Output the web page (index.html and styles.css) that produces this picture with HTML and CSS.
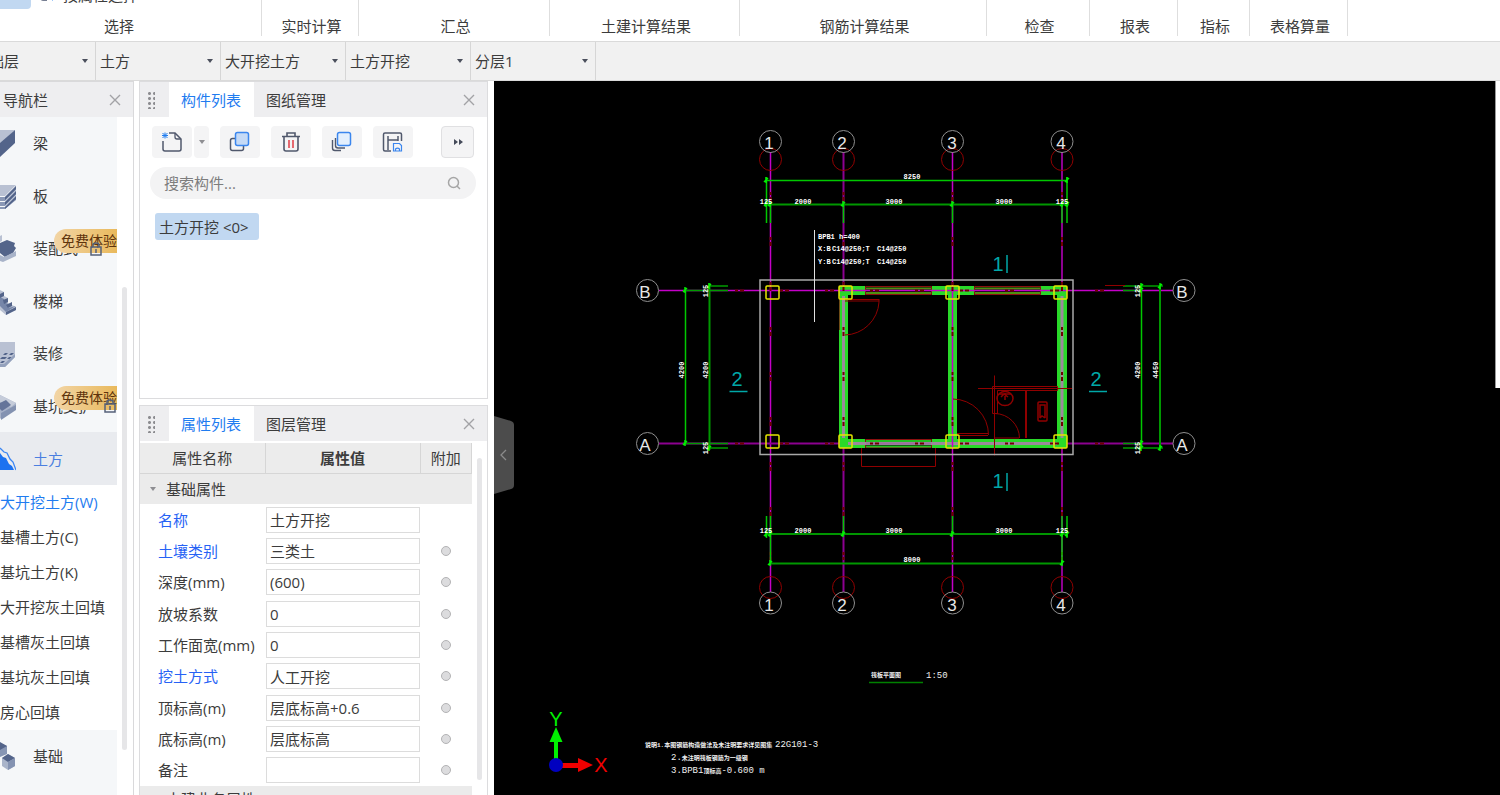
FILE: index.html
```html
<!DOCTYPE html>
<html lang="zh-CN">
<head>
<meta charset="utf-8">
<meta name="viewport" content="width=device-width, initial-scale=1">
<title>土建计量</title>
<link rel="stylesheet" href="styles.css">
</head>
<body>
<header class="ribbon">
  <section class="group g-select">
    <div class="group-tools">
      <button class="tool-active" type="button" aria-label="选择"></button>
      <button class="tool-prop" type="button">
        <svg width="20" height="16" viewBox="0 0 20 16" fill="none"><path d="M5 2H2v9q0 2 2 2h4" stroke="#4b5670" stroke-width="1.5"/><path d="M13 5l6 5-3 .5L13 14z" fill="#1f7cf0"/></svg>按属性选择
      </button>
    </div>
    <span>选择</span>
  </section>
  <section class="group g-live"><span>实时计算</span></section>
  <section class="group g-sum"><span>汇总</span></section>
  <section class="group g-civil"><span>土建计算结果</span></section>
  <section class="group g-rebar"><span>钢筋计算结果</span></section>
  <section class="group g-check"><span>检查</span></section>
  <section class="group g-report"><span>报表</span></section>
  <section class="group g-index"><span>指标</span></section>
  <section class="group g-table"><span>表格算量</span></section>
</header>

<div class="combo-bar">
  <label class="combo"><select aria-label="楼层"><option>基础层</option></select></label>
  <label class="combo"><select aria-label="构件大类"><option>土方</option></select></label>
  <label class="combo"><select aria-label="构件类型"><option>大开挖土方</option></select></label>
  <label class="combo"><select aria-label="构件"><option>土方开挖</option></select></label>
  <label class="combo"><select aria-label="分层"><option>分层1</option></select></label>
</div>

<div class="workspace">
  <aside class="nav">
    <div class="nav-head"><h2>导航栏</h2>
      <button class="close" type="button" aria-label="关闭导航栏"><svg width="12" height="12" viewBox="0 0 12 12"><path d="M1 1l10 10M11 1L1 11" stroke="#a2a2a6" stroke-width="1.4"/></svg></button>
    </div>
    <div class="nav-body">
      <nav class="nav-list">
        <a class="nav-item" href="#"><svg class="nav-icon" viewBox="0 0 16 32"><path d="M0 3h15L0 18z" fill="#b9c1d3"/><path d="M15 3v13L0 30V16z" fill="#53648a"/></svg>梁</a>
        <a class="nav-item" href="#"><svg class="nav-icon" viewBox="0 0 16 32"><path d="M0 5h16L5 16H0z" fill="#b9c1d3"/><path d="M0 17h5L16 6v4L5 21H0zM0 22h5l11-11v4L5 26H0zM0 27h5l11-11v4L5 29H0z" fill="#8a98b6"/><path d="M5 17L16 6v3L5 20zM5 22l11-11v3L5 25zM5 27l11-11v3L5 29z" fill="#53648a"/></svg>板</a>
        <a class="nav-item" href="#"><svg class="nav-icon" viewBox="0 0 16 32"><path d="M0 4l2-1v6l-2 1z" fill="#b9c1d3"/><path d="M0 11l7-3 8 3-1 3 2 2-3 5-8 4-5-4z" fill="#53648a"/><path d="M0 23l4 2 12-6v5L3 30l-3-1z" fill="#a8b3c9"/></svg>装配式
          <em class="badge">免费体验</em>
          <svg class="lock lock-a" viewBox="0 0 12 14" fill="none" stroke="#56617a" stroke-width="1.5"><path d="M3 5V3a3 2 0 016 0v2"/><path d="M1 5h10v8H1z"/><path d="M6 7v4"/></svg></a>
        <a class="nav-item" href="#"><svg class="nav-icon" viewBox="0 0 16 32"><path d="M0 5l4 2v4l4 2v5l8 4v3l-10 5-6-5z" fill="#b9c1d3"/><path d="M0 12l4 2v3l4 2v4l8-2-10 6-6-6z" fill="#7686a9"/><path d="M0 9l4-2v4l-4 2zM3 15l5-2v4l-4 2zM6 20l6-3v4l-4 2zM6 27l10-5v3L6 30z" fill="#53648a"/></svg>楼梯</a>
        <a class="nav-item" href="#"><svg class="nav-icon" viewBox="0 0 16 32"><path d="M0 5h15v15L5 30H0z" fill="#b9c1d3"/><path d="M3 18l2-2h3l-2 2zM9 18l2-2h3l-2 2zM0 22h5l2-2H2zM7 22l2-2h3l-2 2zM0 26l2-2h3l-2 2z" fill="#53648a"/><path d="M0 27h4L15 17v3L5 30H0z" fill="#94a1bc"/></svg>装修</a>
        <a class="nav-item" href="#"><svg class="nav-icon" viewBox="0 0 16 32"><path d="M0 5l16 8v5L1 29l-1-1z" fill="#a6b1c8"/><path d="M0 5l16 8-5 4-11-5z" fill="#c5ccda"/><path d="M0 13l6-3 5 5-9 6-2-2z" fill="#64749a"/><path d="M1 23l15-8v5L1 30z" fill="#8392b1"/></svg>基坑支护
          <em class="badge">免费体验</em>
          <svg class="lock lock-b" viewBox="0 0 12 14" fill="none" stroke="#56617a" stroke-width="1.5"><path d="M3 5V3a3 2 0 016 0v2"/><path d="M1 5h10v8H1z"/><path d="M6 7v4"/></svg></a>
        <a class="nav-item current" href="#"><svg class="nav-icon" viewBox="0 0 16 32"><path d="M0 10l3 4 3 1 3 6 3 2 2 4H0z" fill="#1c72f0"/><path d="M0 5l4 4 3 1 3 6 3 3 3 8" fill="none" stroke="#3c86f2" stroke-width="1.3"/></svg>土方</a>
      </nav>
      <ul class="sub-list">
        <li><a class="sub on" href="#">大开挖土方(W)</a></li>
        <li><a class="sub" href="#">基槽土方(C)</a></li>
        <li><a class="sub" href="#">基坑土方(K)</a></li>
        <li><a class="sub" href="#">大开挖灰土回填</a></li>
        <li><a class="sub" href="#">基槽灰土回填</a></li>
        <li><a class="sub" href="#">基坑灰土回填</a></li>
        <li><a class="sub" href="#">房心回填</a></li>
      </ul>
      <div class="nav-list nav-rest">
        <a class="nav-item" href="#"><svg class="nav-icon" viewBox="0 0 16 32"><path d="M0 3l7 3v8l-7 3z" fill="#8796b4"/><path d="M0 2l7 4-7 4z" fill="#53648a"/><path d="M2 18l6-4 7 4v8l-7 4-6-4z" fill="#a9b4ca"/><path d="M2 18l6-4 7 4-7 4z" fill="#53648a"/><path d="M8 22l7-4v8l-7 4z" fill="#8493b2"/></svg>基础</a>
      </div>
    </div>
    <div class="nav-thumb"></div>
  </aside>

  <div class="docks">
    <section class="dock dock-list">
      <div class="dock-head">
        <span class="grip"></span>
        <button class="tab active" type="button">构件列表</button>
        <button class="tab" type="button">图纸管理</button>
        <button class="close" type="button" aria-label="关闭"><svg width="12" height="12" viewBox="0 0 12 12"><path d="M1 1l10 10M11 1L1 11" stroke="#a2a2a6" stroke-width="1.4"/></svg></button>
      </div>
      <div class="toolbar">
        <div class="split">
          <button class="tool" type="button" aria-label="新建"><svg width="24" height="24" viewBox="0 0 24 24" fill="none"><path d="M3 11v8q0 2 2 2h14q2 0 2-2V9l-6-6H9" stroke="#50586c" stroke-width="1.5"/><path d="M15 3v4q0 2 2 2h4" stroke="#50586c" stroke-width="1.3"/><path d="M2.500 3l5 5M7.500 3l-5 5M5 2.500v6M2 5.500h6" stroke="#1f7cf0" stroke-width="1"/></svg></button>
          <button class="tool more" type="button" aria-label="新建选项"><i class="caret"></i></button>
        </div>
        <button class="tool" type="button" aria-label="复制"><svg width="24" height="24" viewBox="0 0 24 24" fill="none"><rect x="2.500" y="8.500" width="13" height="12" rx="2" stroke="#50586c" stroke-width="1.500"/><rect x="7.500" y="2.500" width="13" height="13" rx="2" fill="#c5daf6" stroke="#3b86ee" stroke-width="1.500"/></svg></button>
        <button class="tool" type="button" aria-label="删除"><svg width="24" height="24" viewBox="0 0 24 24" fill="none"><path d="M5 7v12q0 2 2 2h10q2 0 2-2V7M3 6.500h18M8 6V3h8v3" stroke="#50586c" stroke-width="1.600"/><path d="M10 10v8M14 10v8" stroke="#e34850" stroke-width="1.600"/></svg></button>
        <button class="tool" type="button" aria-label="层间复制"><svg width="24" height="24" viewBox="0 0 24 24" fill="none"><path d="M2.500 10v8q0 2.500 2.500 2.500h6M5.500 8v7.500q0 2.500 2.500 2.500h7" stroke="#50586c" stroke-width="1.400"/><rect x="7.500" y="2.500" width="13" height="13" rx="2" fill="#e3effd" stroke="#3b86ee" stroke-width="1.500"/></svg></button>
        <button class="tool" type="button" aria-label="构件存盘"><svg width="24" height="24" viewBox="0 0 24 24" fill="none"><path d="M10 21H4q-1.500 0-1.500-1.500v-15Q2.500 3 4 3h15q1.500 0 1.500 1.500V11M7 20V6M7 10h10M17 6v5" stroke="#50586c" stroke-width="1.500"/><path d="M12.500 13.500h6l2 2v5.500h-8zM14.500 21v-2q2-2 4 0v2" stroke="#3b86ee" stroke-width="1.200"/></svg></button>
        <button class="tool overflow" type="button" aria-label="更多"><svg width="12" height="8" viewBox="0 0 12 8"><path d="M2 1l4 3-4 3zM7 1l4 3-4 3z" fill="#454b5a"/></svg></button>
      </div>
      <div class="search">
        <input type="search" aria-label="搜索构件" placeholder="搜索构件...">
        <svg width="14" height="14" viewBox="0 0 14 14" fill="none" stroke="#a6a6a6" stroke-width="1.500"><circle cx="6.500" cy="6.500" r="5"/><path d="M10 10l3 3"/></svg>
      </div>
      <div class="tree"><button class="node" type="button">土方开挖 &lt;0&gt;</button></div>
    </section>

    <section class="dock dock-props">
      <div class="dock-head">
        <span class="grip"></span>
        <button class="tab active" type="button">属性列表</button>
        <button class="tab" type="button">图层管理</button>
        <button class="close" type="button" aria-label="关闭"><svg width="12" height="12" viewBox="0 0 12 12"><path d="M1 1l10 10M11 1L1 11" stroke="#a2a2a6" stroke-width="1.4"/></svg></button>
      </div>
      <div class="props-body">
        <table class="props">
          <colgroup><col class="c-name"><col class="c-value"><col class="c-extra"></colgroup>
          <thead><tr><th>属性名称</th><th class="strong">属性值</th><th>附加</th></tr></thead>
          <tbody>
            <tr class="section"><td colspan="3"><i class="caret"></i>基础属性</td></tr>
            <tr><td class="key"><label for="p1">名称</label></td><td><input class="val" id="p1" value="土方开挖"></td><td></td></tr>
            <tr><td class="key"><label for="p2">土壤类别</label></td><td><input class="val" id="p2" value="三类土"></td><td class="mid"><input class="dot" type="radio" aria-label="附加土壤类别"></td></tr>
            <tr><td><label for="p3">深度(mm)</label></td><td><input class="val" id="p3" value="(600)"></td><td class="mid"><input class="dot" type="radio" aria-label="附加深度"></td></tr>
            <tr><td><label for="p4">放坡系数</label></td><td><input class="val" id="p4" value="0"></td><td class="mid"><input class="dot" type="radio" aria-label="附加放坡系数"></td></tr>
            <tr><td><label for="p5">工作面宽(mm)</label></td><td><input class="val" id="p5" value="0"></td><td class="mid"><input class="dot" type="radio" aria-label="附加工作面宽"></td></tr>
            <tr><td class="key"><label for="p6">挖土方式</label></td><td><input class="val" id="p6" value="人工开挖"></td><td class="mid"><input class="dot" type="radio" aria-label="附加挖土方式"></td></tr>
            <tr><td><label for="p7">顶标高(m)</label></td><td><input class="val" id="p7" value="层底标高+0.6"></td><td class="mid"><input class="dot" type="radio" aria-label="附加顶标高"></td></tr>
            <tr><td><label for="p8">底标高(m)</label></td><td><input class="val" id="p8" value="层底标高"></td><td class="mid"><input class="dot" type="radio" aria-label="附加底标高"></td></tr>
            <tr><td><label for="p9">备注</label></td><td><input class="val" id="p9" value=""></td><td class="mid"><input class="dot" type="radio" aria-label="附加备注"></td></tr>
            <tr class="section"><td colspan="3"><i class="caret"></i>土建业务属性</td></tr>
          </tbody>
        </table>
        <div class="props-thumb"></div>
      </div>
    </section>
  </div>

  <main class="canvas">
    <svg class="drawing" viewBox="494 81 1006 714" preserveAspectRatio="xMinYMin meet" fill="none">
      <defs>
        <path id="tick" d="M-2 2L2-2M0-3V3" stroke="#00f000" stroke-width="1.500"/>
        <rect id="col" width="13" height="13" rx="1" stroke="#e6e600" stroke-width="1.500"/>
      </defs>

      <g fill="#29d929">
        <path d="M839 286h9v162h-9zM948 286h9v162h-9zM1057 286h10v162h-10z"/>
        <path d="M848 286h17v9h-17zM932 286h42v9h-42zM1040 286h17v9h-17z"/>
        <path d="M848 439h17v9h-17zM932 439h125v9h-125z"/>
      </g>
      <g stroke="#8b1010">
        <path d="M865.500 286.500h66v8h-66zM974.500 286.500h66v8h-66zM865.500 439.500h66v8h-66z"/>
        <path d="M839.500 296V330" opacity=".7"/>
      </g>
      <path d="M866 288.500h65M866 293h65M975 288.500h65M975 293h65" stroke="#4f8f10" stroke-width="2"/>
      <path d="M866 441h65M866 446.500h65" stroke="#22c022" stroke-width="2"/>
      <path d="M843.500 296V438M1062 296V438M848 443.500h209" stroke="#9c8a9c" stroke-width="3"/>
      <path d="M866 443.500h65" stroke="#9c709c" stroke-width="2"/>

      <g stroke="#c400c8" stroke-width="1.500">
        <path d="M770.500 152V592M952.500 152V592"/>
        <path d="M659 290.500H1173"/>
      </g>
      <g stroke="#8c0090" stroke-width="2">
        <path d="M843.500 152V286M843.500 448V592M1062 152V286M1062 448V592M659 443.500H840M1067 443.500H1173"/>
      </g>
      <g stroke="#700000" stroke-width="2" stroke-dasharray="3 2 4 36">
        <path d="M770.500 192V560M843.500 192V560M952.500 192V560M1062 192V560M735 290.500H1110M735 443.500H1110"/>
      </g>

      <g stroke="#00c800" stroke-width="1.500">
        <path d="M766 180.500h301M685.500 290v154M1141.500 285v163M766 534h301"/>
        <path d="M764 204.500h305M770.500 563.500H1062M709.500 283v167M1160 286v162" stroke="#009800" stroke-width="2"/>
        <path d="M766.500 177v46M770.500 204v19M843.500 204v19M952.500 204v19M1062 204v19M1067 177v46"/>
        <path d="M766.500 516v22M770.500 516v48M843.500 516v18M952.500 516v18M1062 516v48M1067 516v22"/>
        <path d="M683 290.500h45M709 286h19M683 443.500h45M709 448h19M1123 286h40M1123 290.500h19M1123 443.500h19M1123 448h40" stroke="#009c00"/>
      </g>
      <g>
        <use href="#tick" x="766" y="180"/><use href="#tick" x="1067" y="180"/>
        <use href="#tick" x="766" y="204"/><use href="#tick" x="770" y="204"/><use href="#tick" x="843" y="204"/><use href="#tick" x="952" y="204"/><use href="#tick" x="1062" y="204"/><use href="#tick" x="1067" y="204"/>
        <use href="#tick" x="766" y="534"/><use href="#tick" x="770" y="534"/><use href="#tick" x="843" y="534"/><use href="#tick" x="952" y="534"/><use href="#tick" x="1062" y="534"/><use href="#tick" x="1067" y="534"/>
        <use href="#tick" x="770" y="563"/><use href="#tick" x="1062" y="563"/>
        <use href="#tick" x="685" y="290"/><use href="#tick" x="685" y="443"/><use href="#tick" x="709" y="286"/><use href="#tick" x="709" y="448"/>
        <use href="#tick" x="1141" y="286"/><use href="#tick" x="1141" y="290"/><use href="#tick" x="1160" y="286"/><use href="#tick" x="1141" y="443"/><use href="#tick" x="1141" y="448"/><use href="#tick" x="1160" y="448"/>
      </g>

      <g stroke="#900000">
        <circle cx="770.500" cy="159.500" r="11"/><circle cx="843.500" cy="159.500" r="11"/><circle cx="952.500" cy="159.500" r="11"/><circle cx="1062" cy="159.500" r="11"/>
        <circle cx="770.500" cy="587.500" r="11"/><circle cx="843.500" cy="587.500" r="11"/><circle cx="952.500" cy="587.500" r="11"/><circle cx="1062" cy="587.500" r="11"/>
        <path d="M845 299.500h34M845 301h34M879 299v3A35 35 0 01845 335"/>
        <path d="M953 399A36 36 0 01988.500 435M957 433.500h31M957 435.500h31"/>
        <path d="M995 413.500A25 25 0 011019.500 438M995 438h24"/>
        <path d="M992.500 386.500h65v4h-60v23h-5zM994.500 375.500v80M978 388.500h94M1025.500 391v47M1026.500 391v47"/>
        <path d="M861.500 448v18.500h74V448M1105 285.500h20"/>
      </g>
      <g stroke="#900000" stroke-width="1.500">
        <ellipse cx="1005" cy="398.500" rx="8" ry="7"/><path d="M999 394h12M1005 393v7M1001 397l3-3 4 3"/>
        <rect x="1038" y="402" width="9" height="19" rx="1"/><path d="M1040 418v-13h5v13M1040 418l2-2 3 2"/>
      </g>

      <path d="M760 280H1073V454.500H760z" stroke="#a8a8a8" stroke-width="1.500"/>
      <path d="M814.500 230v92" stroke="#e0e0e0"/>
      <use href="#col" x="766" y="286"/><use href="#col" x="839" y="286"/><use href="#col" x="946" y="286"/><use href="#col" x="1054" y="286"/>
      <use href="#col" x="766" y="435"/><use href="#col" x="839" y="435"/><use href="#col" x="946" y="435"/><use href="#col" x="1054" y="435"/>

      <g stroke="#8f8f8f">
        <circle cx="770.500" cy="141.500" r="11"/><circle cx="843.500" cy="141.500" r="11"/><circle cx="952.500" cy="141.500" r="11"/><circle cx="1062" cy="141.500" r="11"/>
        <circle cx="770.500" cy="603" r="11"/><circle cx="843.500" cy="603" r="11"/><circle cx="952.500" cy="603" r="11"/><circle cx="1062" cy="603" r="11"/>
        <circle cx="647.500" cy="290.500" r="11"/><circle cx="647.500" cy="443.500" r="11"/>
        <circle cx="1184" cy="290.500" r="11"/><circle cx="1184" cy="443.500" r="11"/>
      </g>
      <g class="axis">
        <text x="769" y="149">1</text><text x="842" y="149">2</text><text x="952" y="149">3</text><text x="1061" y="149">4</text>
        <text x="769" y="611">1</text><text x="842" y="611">2</text><text x="952" y="611">3</text><text x="1061" y="611">4</text>
        <text x="645" y="298">B</text><text x="645" y="451">A</text><text x="1182" y="298">B</text><text x="1182" y="451">A</text>
      </g>
      <g class="dim">
        <text x="912" y="179">8250</text>
        <text x="766" y="204">125</text><text x="803" y="204">2000</text><text x="894" y="204">3000</text><text x="1004" y="204">3000</text><text x="1062" y="204">125</text>
        <text x="766" y="533">125</text><text x="803" y="533">2000</text><text x="894" y="533">3000</text><text x="1004" y="533">3000</text><text x="1062" y="533">125</text>
        <text x="912" y="562">8000</text>
        <text transform="translate(684 370) rotate(-90)">4200</text><text transform="translate(708 370) rotate(-90)">4200</text>
        <text transform="translate(708 291) rotate(-90)">125</text><text transform="translate(708 448) rotate(-90)">125</text>
        <text transform="translate(1140 370) rotate(-90)">4200</text><text transform="translate(1158 370) rotate(-90)">4450</text>
        <text transform="translate(1140 291) rotate(-90)">125</text><text transform="translate(1140 448) rotate(-90)">125</text>
      </g>
      <g class="mark">
        <text x="998" y="271">1</text><text x="998" y="488">1</text><text x="737" y="386">2</text><text x="1096" y="386">2</text>
        <path d="M1007 255v18M1007 473v18M729.500 391.500h18M1089 391.500h18" stroke="#00a8a8" stroke-width="1.500"/>
      </g>
      <g class="note">
        <text x="818" y="239">BPB1 h=400</text>
        <text x="818" y="251">X:B</text><text x="832" y="251">C14@250;T</text><text x="877" y="251">C14@250</text>
        <text x="818" y="264">Y:B</text><text x="832" y="264">C14@250;T</text><text x="877" y="264">C14@250</text>
      </g>
      <g class="caption">
        <text class="cad-cn" x="871" y="677">筏板平面图</text><text x="926" y="678">1:50</text>
        <path d="M869 682.500h54" stroke="#008000" stroke-width="1.500"/>
        <text class="cad-cn" x="645" y="747">说明1.本图钢筋构造做法及未注明要求详见图集</text><text x="775" y="747">22G101-3</text>
        <text x="671" y="760">2.<tspan class="cad-cn">未注明筏板钢筋为一级钢</tspan></text>
        <text x="671" y="773">3.BPB1<tspan class="cad-cn">顶标高</tspan>-0.600 m</text>
      </g>

      <g>
        <path d="M554 764V742h4v22z" fill="#00f000"/><path d="M549.500 742L556 727l6.500 15z" fill="#00f000"/>
        <path d="M558 763h22v5h-22z" fill="#f00000"/><path d="M578 758l15 7-15 7z" fill="#f00000"/>
        <circle cx="556" cy="765" r="7" fill="#0000c0"/>
        <text class="axis-y" x="556" y="726">Y</text><text class="axis-x" x="601" y="772">X</text>
      </g>
    </svg>
    <button class="collapse" type="button" aria-label="收起面板"><svg width="20" height="78" viewBox="0 0 20 78" fill="none"><path d="M0 0l17 5q3 1 3 4v60q0 3-3 4L0 78z" fill="#4c4c4c"/><path d="M12 34l-5 5 5 5" stroke="#8b8b8b" stroke-width="1.300"/></svg></button>
    <div class="side-panel"></div>
  </main>
</div>
</body>
</html>
```
FILE: styles.css
```css
* { box-sizing: border-box; }

body {
  margin: 0;
  height: 100vh;
  display: flex;
  flex-direction: column;
  overflow: hidden;
  background: #fff;
  color: #3c3c3c;
  font: 15px/20px "Open Sans", "Noto Sans CJK SC", sans-serif;
}

button, input, select { font: inherit; color: inherit; }
button { border: 0; padding: 0; background: none; }
a { color: inherit; text-decoration: none; }
h2 { margin: 0; font: inherit; }

/* Ribbon */
.ribbon {
  flex: none;
  display: flex;
  height: 42px;
  padding-bottom: 5px;
  margin-left: -23px;
  border-bottom: 1px solid #dadada;
}
.group {
  flex: none;
  display: flex;
  flex-direction: column;
  justify-content: flex-end;
  align-items: center;
  padding-left: 3px;
  border-right: 1px solid #dedede;
}
.g-select { width: 285px; padding-left: 0; }
.g-live { width: 97px; }
.g-sum { width: 191px; }
.g-civil { width: 190px; }
.g-rebar { width: 247px; }
.g-check { width: 103px; }
.g-report { width: 88px; }
.g-index { width: 72px; }
.g-table { width: 98px; }
.group-tools {
  flex: none;
  align-self: stretch;
  display: flex;
  align-items: flex-end;
  gap: 8px;
  padding-bottom: 7px;
}
.tool-active { width: 54px; height: 24px; border-radius: 4px; background: #c1d8f1; }
.tool-prop { display: flex; align-items: center; gap: 4px; margin-bottom: 4px; }

/* Combo bar */
.combo-bar {
  flex: none;
  display: flex;
  height: 39px;
  margin-left: -30px;
  background: #f1f1f1;
  border-bottom: 1px solid #dadada;
}
.combo {
  flex: none;
  display: flex;
  align-items: center;
  width: 125px;
  padding-right: 7px;
  border-right: 1px solid #d6d6d6;
}
.combo:first-child { width: 126px; }
.combo select {
  flex: 1;
  min-width: 0;
  height: 36px;
  padding: 0 4px;
  border: 0;
  background: none;
  appearance: none;
}
.combo::after, .caret {
  content: "";
  width: 0;
  border: 3px solid transparent;
  border-top: 4px solid #4a4f5c;
  border-bottom: 0;
}

/* Work area */
.workspace { flex: 1; min-height: 0; display: flex; }

.nav {
  position: relative;
  flex: none;
  width: 134px;
  display: flex;
  flex-direction: column;
  border: solid #d9d9db;
  border-width: 1px 1px 0 0;
  overflow: hidden;
}
.nav-head {
  flex: none;
  display: flex;
  justify-content: space-between;
  align-items: center;
  height: 35px;
  padding: 0 12px 0 3px;
  background: #eeeef0;
}
.close { display: flex; }
.nav-body { width: 117px; }
.nav-list { display: flex; flex-direction: column; background: #f5f7f9; }
.nav-item {
  position: relative;
  display: flex;
  align-items: center;
  gap: 17px;
  height: 52px;
}
.nav-item:nth-child(even) { height: 53px; }
.nav-item.current { height: 53px; background: #e9ebef; color: #4b7fe0; }
.nav-icon { flex: none; width: 16px; height: 32px; }
.nav-rest { height: 80px; }
.badge {
  position: absolute;
  top: 7px;
  right: 0;
  padding-left: 7px;
  border-radius: 12px 0 0 12px;
  background: linear-gradient(90deg, #f2d5a6, #e9b95c);
  color: #5e330c;
  font-style: normal;
  font-size: 14px;
  line-height: 24px;
}
.lock { position: absolute; top: 20px; width: 12px; height: 14px; }
.lock-a { right: 15px; }
.lock-b { right: 1px; }
.sub-list { margin: 0; padding: 0; list-style: none; background: #fff; }
.sub { display: block; line-height: 35px; white-space: nowrap; }
.sub.on { color: #1f7cf0; }
.nav-thumb {
  position: absolute;
  top: 205px;
  bottom: 45px;
  right: 6px;
  width: 5px;
  border-radius: 3px;
  background: #e6e6e8;
}

.docks {
  flex: none;
  width: 360px;
  display: flex;
  flex-direction: column;
  gap: 6px;
  padding: 0 6px 0 5px;
}
.dock { border: 1px solid #dcdcde; background: #fff; }
.dock-list { flex: none; height: 318px; }
.dock-props {
  flex: 1;
  min-height: 0;
  display: flex;
  flex-direction: column;
  overflow: hidden;
  border-bottom: 0;
}
.dock-head {
  flex: none;
  display: flex;
  height: 35px;
  padding-right: 12px;
  background: #eeeef0;
}
.dock-head .close { margin-left: auto; align-self: center; }
.grip {
  width: 8px;
  height: 18px;
  margin: 9px 14px 0 7px;
  background: radial-gradient(circle, #8c8c90 1px, transparent 2px) 0 0 / 5px 5px;
}
.tab { padding: 0 12px; }
.tab.active { padding-right: 13px; background: #fff; color: #1f7cf0; }

.toolbar { display: flex; gap: 11px; padding: 9px 13px 0 12px; }
.split { display: flex; gap: 2px; }
.tool {
  display: flex;
  align-items: center;
  justify-content: center;
  width: 40px;
  height: 32px;
  border-radius: 4px;
  background: #f4f4f5;
}
.tool.more { width: 15px; }
.tool.more .caret, .section .caret { border-top-color: #8e8e92; }
.tool.overflow { width: 33px; margin-left: auto; border: 1px solid #e0e0e2; }
.search {
  display: flex;
  align-items: center;
  height: 32px;
  margin: 9px 11px 0 10px;
  padding: 0 15px 0 14px;
  border-radius: 16px;
  background: #f3f3f4;
}
.search input {
  flex: 1;
  min-width: 0;
  padding: 0;
  border: 0;
  outline: 0;
  background: none;
}
.search input::placeholder { color: #7d7d7d; opacity: 1; }
.tree { padding: 14px 15px; }
.node { height: 27px; padding: 0 10px 0 4px; border-radius: 3px; background: #c1d8f1; }

.props-body { position: relative; min-height: 0; padding-top: 2px; }
.props { width: 332px; border-collapse: collapse; table-layout: fixed; }
.c-name { width: 125px; }
.c-value { width: 155px; }
.props th {
  height: 30px;
  padding: 0;
  border: solid #d6d6d6;
  border-width: 0 1px 1px 0;
  background: #ececec;
  font-weight: normal;
}
.props .strong { font-weight: bold; }
.props td { height: 31px; padding: 0 1px 0 18px; white-space: nowrap; }
.props tr:nth-child(3n + 4) td { height: 32px; }
.props td + td { padding: 0 0 0 1px; }
.props .section td { padding-left: 10px; background: #ebebeb; }
.props .section:last-child td { height: 26px; }
.section .caret { display: inline-block; margin-right: 10px; vertical-align: 4px; }
.props .key { color: #2662f5; }
.val {
  display: block;
  width: 100%;
  height: 26px;
  padding: 0 3px;
  border: 1px solid #dcdcdc;
  background: #fff;
}
.props .mid { padding: 0; text-align: center; }
.dot {
  display: block;
  width: 10px;
  height: 10px;
  margin: 0 auto;
  appearance: none;
  border: 1px solid #b3b3b5;
  border-radius: 50%;
  background: #dcdcde;
}
.props-thumb {
  position: absolute;
  top: 17px;
  right: 5px;
  width: 5px;
  height: 322px;
  border-radius: 3px;
  background: #e6e6e8;
}

/* Drawing canvas */
.canvas { position: relative; flex: 1; min-width: 0; background: #000; }
.drawing { display: block; width: 100%; height: 100%; }
.drawing text { font-family: "Liberation Sans", "Noto Sans CJK SC", sans-serif; }
.drawing .dim text, .drawing .note text, .drawing .caption text { font-family: "Liberation Mono", "Noto Sans CJK SC", monospace; }
.axis { fill: #e8e8e8; font-size: 17px; text-anchor: middle; }
.dim { fill: #fff; font-size: 7px; font-weight: bold; text-anchor: middle; }
.mark { fill: #00a8a8; font-size: 20px; text-anchor: middle; }
.note { fill: #fff; font-size: 7px; font-weight: bold; }
.caption { fill: #f0f0f0; font-size: 9px; }
.caption .cad-cn { font-size: 6px; font-weight: bold; }
.axis-x, .axis-y { font-size: 20px; text-anchor: middle; }
.axis-x { fill: #f00000; }
.axis-y { fill: #00f000; }
.collapse { position: absolute; top: 335px; left: 0; display: flex; }
.side-panel {
  position: absolute;
  top: 0;
  right: 0;
  width: 5px;
  height: 307px;
  border-left: 1px solid #999;
  background: #fff;
}
```
